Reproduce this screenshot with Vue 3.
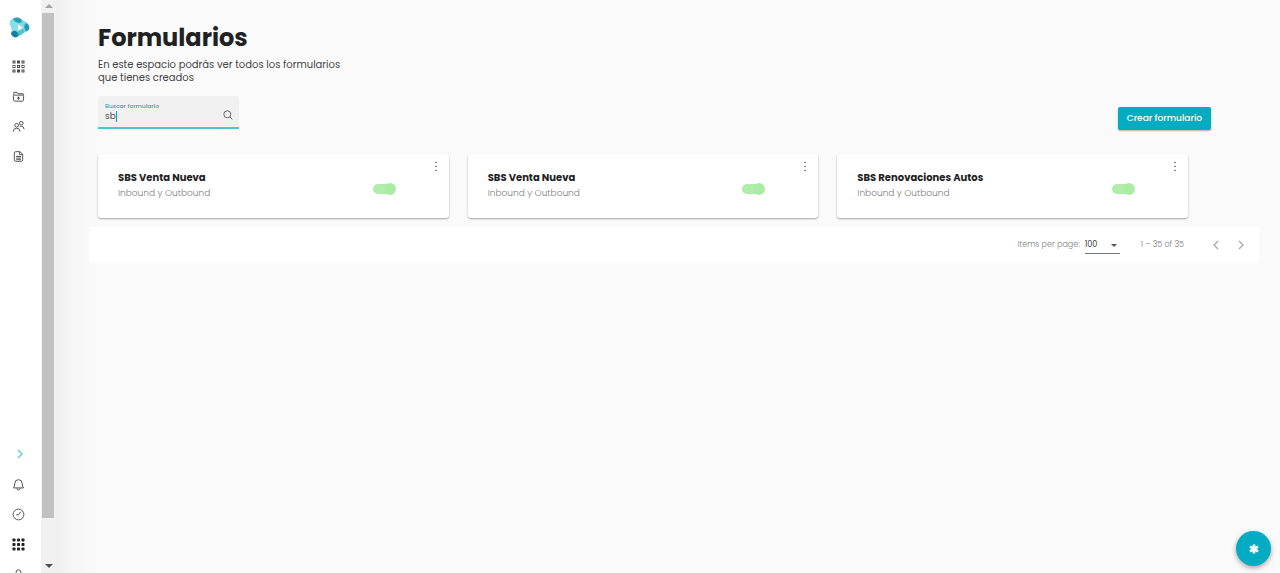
<script setup>
import { ref } from 'vue'

const search = ref('sb')
const pageSize = ref('100')
const forms = ref([
  { id: 1, name: 'SBS Venta Nueva', type: 'Inbound y Outbound', active: true },
  { id: 2, name: 'SBS Venta Nueva', type: 'Inbound y Outbound', active: true },
  { id: 3, name: 'SBS Renovaciones Autos', type: 'Inbound y Outbound', active: true },
])
const cells = [2, 6.5, 11]
</script>

<template>
  <div class="app">
    <aside class="sidebar">
      <nav class="nav" aria-label="Principal">
        <a href="#" class="logo" aria-label="Inicio">
          <svg width="22" height="24" viewBox="0 0 22 24">
            <path d="M1 8Q0 4 4 2.5Q8 0 12 3L17 6Q21 8 20.5 12Q20 15 16 16L10 20Q6 23 3 20Q1 18 3 14Z" fill="#7fdbe3" />
            <path d="M4 3Q8 0 12 3Q14 6 11 7Q6 7 4 3Z" fill="#2b9fb5" />
            <path d="M1 8Q2 4 4 4Q6 8 10 8L8 15L3 14Z" fill="#86dfe6" />
            <path d="M17 7Q21 9 20 13Q18 17 16 14Q14 10 17 7Z" fill="#2c98b2" />
            <path d="M8 16L14 13L16 16L10 20Z" fill="#4fc3d2" />
            <path d="M2 17Q5 13 8 16Q11 19 8 21Q3 22 2 17Z" fill="#187f9e" />
            <path d="M9 8.5L14 11.5L9 14.5Z" fill="#fff" />
          </svg>
        </a>
        <a href="#" class="item" aria-label="Aplicaciones">
          <svg width="13" height="13" viewBox="0 0 13 13" class="line">
            <template v-for="y in cells" :key="y">
              <rect v-for="x in cells" :key="x" :x="x - 1" :y="y - 1" width="2" height="2" />
            </template>
          </svg>
        </a>
        <a href="#" class="item" aria-label="Nueva carpeta">
          <svg width="13" height="13" viewBox="0 0 14 14" class="line">
            <path d="M2 5V2.5H5.5L6.5 4H12V5.5M2 5.5H12Q12.7 5.5 12.6 6.3L12.2 11.2Q12.1 12 11.3 12H2.7Q1.9 12 1.8 11.2L1.4 6.3Q1.3 5.5 2 5.5ZM7 7V10.6M5.2 8.8H8.8" />
          </svg>
        </a>
        <a href="#" class="item" aria-label="Contactos">
          <svg width="13" height="13" viewBox="0 0 14 14" class="line">
            <circle cx="5" cy="5.7" r="2" /><circle cx="10" cy="3.5" r="2" />
            <path d="M1.3 12.5Q1.5 8.8 5 8.8T8.7 12.5M8.2 7.2Q9 6.7 10 6.7Q13 6.7 13 10" />
          </svg>
        </a>
        <a href="#" class="item" aria-label="Formularios">
          <svg width="13" height="13" viewBox="0 0 14 14" class="line">
            <path d="M4 1.8H8.5L11.5 4.5V10.5Q11.5 12.2 10 12.2H4Q2.5 12.2 2.5 10.5V3.3Q2.5 1.8 4 1.8ZM8.2 2V5H11.3M4.5 7H9.7M4.5 8.7H9.7M4.5 10.4H9.7" />
          </svg>
        </a>
        <button type="button" class="item expand" aria-label="Expandir menú">
          <svg width="8" height="10" viewBox="0 0 8 10"><path d="M2 1L6 5L2 9" fill="none" stroke="#6fcfd3" stroke-width="1.5" /></svg>
        </button>
        <a href="#" class="item" aria-label="Notificaciones">
          <svg width="13" height="13" viewBox="0 0 14 14" class="line">
            <path d="M1.5 10.7Q3 9 3 6Q3 1.8 7 1.8T11 6Q11 9 12.5 10.7ZM5.3 11Q5.5 13 7 13T8.7 11" />
          </svg>
        </a>
        <a href="#" class="item" aria-label="Historial">
          <svg width="13" height="13" viewBox="0 0 14 14" class="line">
            <circle cx="7" cy="7" r="5.8" /><path d="M9.5 4L7 7.3H4.5" />
          </svg>
        </a>
        <a href="#" class="item" aria-label="Más aplicaciones">
          <svg width="13" height="13" viewBox="0 0 13 13" fill="#222">
            <template v-for="y in cells" :key="y">
              <rect v-for="x in cells" :key="x" :x="x - 1.5" :y="y - 1.5" width="3" height="3" rx="0.7" />
            </template>
          </svg>
        </a>
        <a href="#" class="item" aria-label="Perfil">
          <svg width="13" height="13" viewBox="0 0 14 14" class="line">
            <circle cx="7" cy="4.5" r="2.6" /><path d="M2 13Q2.5 8.5 7 8.5T12 13" />
          </svg>
        </a>
      </nav>
      <div class="scrollbar" aria-hidden="true">
        <svg class="arrow" width="8" height="4" viewBox="0 0 8 4"><path d="M4 0L8 4H0Z" fill="#a3a3a3" /></svg>
        <div class="track"><div class="thumb"></div></div>
        <svg class="arrow" width="8" height="4" viewBox="0 0 8 4"><path d="M4 4L0 0H8Z" fill="#505050" /></svg>
      </div>
    </aside>

    <main class="content">
      <header class="heading">
        <h1>Formularios</h1>
        <p>En este espacio podrás ver todos los formularios<br>que tienes creados</p>
      </header>

      <div class="toolbar">
        <div class="field">
          <div class="entry">
            <label for="search">Buscar formulario</label>
            <div class="value">
              <input id="search" v-model="search" type="text" autocomplete="off">
              <span class="caret"></span>
            </div>
          </div>
          <svg width="10" height="10" viewBox="0 0 10 10" fill="none" stroke="#666">
            <circle cx="4.3" cy="4.3" r="3.5" /><path d="M7 7L9.3 9.3" />
          </svg>
        </div>
        <button type="button" class="create">Crear formulario</button>
      </div>

      <section class="cards">
        <article v-for="form in forms" :key="form.id" class="card">
          <div class="info">
            <h2>{{ form.name }}</h2>
            <p>{{ form.type }}</p>
          </div>
          <input v-model="form.active" type="checkbox" role="switch" class="switch" :aria-label="form.name">
          <button type="button" class="more" aria-label="Opciones">
            <svg width="4" height="11" viewBox="0 0 4 11" fill="#555">
              <circle cx="2" cy="1.5" r="0.8" /><circle cx="2" cy="5.5" r="0.8" /><circle cx="2" cy="9.5" r="0.8" />
            </svg>
          </button>
        </article>
      </section>

      <footer class="paginator">
        <label for="size">Items per page:</label>
        <div class="select">
          <select id="size" v-model="pageSize">
            <option>100</option>
            <option>50</option>
          </select>
          <svg width="6" height="3" viewBox="0 0 6 3"><path d="M0 0H6L3 3Z" /></svg>
        </div>
        <span class="range">1 – 35 of 35</span>
        <button type="button" aria-label="Anterior">
          <svg width="6" height="10" viewBox="0 0 6 10"><path d="M5 1L1 5L5 9" /></svg>
        </button>
        <button type="button" aria-label="Siguiente">
          <svg width="6" height="10" viewBox="0 0 6 10"><path d="M1 1L5 5L1 9" /></svg>
        </button>
      </footer>
    </main>

    <button type="button" class="fab" aria-label="Ayuda">
      <svg width="10" height="10" viewBox="0 0 10 10" stroke="#fff" stroke-width="2.6">
        <path d="M5 0.5V9.5M1 2.7L9 7.3M9 2.7L1 7.3" />
      </svg>
    </button>
  </div>
</template>

<style>
body {
  margin: 0;
  background: #fafafa;
}
</style>

<style scoped>
.app {
  display: flex;
  height: 100vh;
  overflow: hidden;
  font-family: Poppins, Inter, "Open Sans", sans-serif;
  color: #212121;
}
h1, h2, p {
  margin: 0;
}
button {
  font-family: inherit;
  border: 0;
  padding: 0;
  background: none;
  cursor: pointer;
}
svg {
  display: block;
}
.sidebar {
  display: flex;
  flex: none;
  background: #fff;
}
.nav {
  display: flex;
  flex-direction: column;
  width: 41px;
  height: calc(100vh + 16px);
}
.logo {
  padding: 16px 0 11px 9px;
}
.item {
  display: flex;
  flex: none;
  align-items: center;
  height: 30px;
  padding-left: 12px;
}
.expand {
  margin-top: auto;
  padding-left: 16px;
}
.line {
  fill: none;
  stroke: #4a4a4a;
  stroke-width: 1;
}
.scrollbar {
  display: flex;
  flex-direction: column;
  width: 15px;
  height: 100vh;
  background: #f1f1f1;
}
.arrow {
  flex: none;
  align-self: center;
  margin: 4px 0 5px;
}
.track {
  flex: 1;
  padding: 0 2px 0 1px;
}
.thumb {
  height: 92.3%;
  background: #c1c1c1;
}
.content {
  flex: 1;
  min-width: 0;
  padding: 22px 21px 0 33px;
  background: linear-gradient(90deg, #eeeeee, #f6f6f6 16px, #fafafa 42px);
}
.heading {
  padding-left: 9px;
}
h1 {
  font-size: 24px;
  line-height: 32px;
  font-weight: 700;
}
.heading p {
  margin-top: 4px;
  font-size: 10px;
  line-height: 13px;
  color: #444;
}
.toolbar {
  display: flex;
  align-items: flex-start;
  justify-content: space-between;
  margin: 12px 48px 0 9px;
}
.field {
  display: flex;
  align-items: center;
  box-sizing: border-box;
  width: 141px;
  height: 33px;
  padding: 0 6px 0 7px;
  border-bottom: 2px solid #4cc4d4;
  border-radius: 3px 3px 0 0;
  background: #f0f0f0;
}
.field svg {
  margin-top: 6px;
}
.entry {
  flex: 1;
  min-width: 0;
}
.field label {
  display: block;
  padding-top: 2px;
  font-size: 6px;
  line-height: 8px;
  font-weight: 500;
  color: #1fa9bd;
}
.value {
  position: relative;
}
.field input {
  display: block;
  width: 100%;
  height: 13px;
  padding: 0;
  border: 0;
  outline: 0;
  background: none;
  font: 9px/13px Poppins, Inter, "Open Sans", sans-serif;
  color: #555;
}
.caret {
  position: absolute;
  left: 11px;
  top: 1px;
  width: 1px;
  height: 11px;
  background: #00acc1;
}
.create {
  height: 23px;
  margin-top: 11px;
  padding: 0 9px;
  border-radius: 2px;
  background: #03acc2;
  box-shadow: 0 1px 2px rgba(0, 0, 0, 0.3);
  font-size: 9px;
  font-weight: 500;
  color: #fff;
}
.cards {
  display: grid;
  grid-template-columns: repeat(3, 1fr);
  gap: 19px;
  margin: 24px 71px 0 9px;
}
.card {
  position: relative;
  display: flex;
  align-items: center;
  justify-content: space-between;
  padding: 16px 53px 17px 20px;
  border-radius: 3px;
  background: #fff;
  box-shadow: 0 1px 2px rgba(0, 0, 0, 0.35);
}
.card h2 {
  font-size: 10px;
  line-height: 15px;
  font-weight: 700;
}
.card p {
  font-size: 9px;
  line-height: 16px;
  font-weight: 300;
  color: #808080;
}
.switch {
  appearance: none;
  position: relative;
  width: 23px;
  height: 12px;
  margin: 6px 0 0;
}
.switch::before {
  content: "";
  position: absolute;
  inset: 1px 2px 1px 0;
  border-radius: 5px;
  background: #b0ecaa;
}
.switch::after {
  content: "";
  position: absolute;
  top: 0;
  left: 0;
  width: 12px;
  height: 12px;
  border-radius: 50%;
  background: #abeca4;
}
.switch:checked::after {
  left: 11px;
}
.more {
  position: absolute;
  top: 7px;
  right: 11px;
}
.paginator {
  display: flex;
  align-items: center;
  height: 36px;
  margin-top: 9px;
  padding-right: 15px;
  background: #fff;
  font-size: 8px;
  line-height: 12px;
  font-weight: 300;
  color: #808080;
}
.paginator label {
  margin-left: auto;
}
.select {
  position: relative;
  margin-left: 5px;
  border-bottom: 1px solid #777;
}
.select select {
  appearance: none;
  display: block;
  width: 35px;
  height: 16px;
  padding: 0;
  border: 0;
  background: none;
  font: inherit;
  font-weight: 400;
  color: #333;
}
.select svg {
  position: absolute;
  right: 3px;
  top: 7px;
  pointer-events: none;
}
.select path {
  fill: #555;
}
.range {
  margin: 0 29px 0 21px;
}
.paginator button + button {
  margin-left: 19px;
}
.paginator button path {
  fill: none;
  stroke: #aaa;
  stroke-width: 1.4;
}
.fab {
  position: fixed;
  right: 9px;
  bottom: 7px;
  display: flex;
  align-items: center;
  justify-content: center;
  width: 35px;
  height: 35px;
  border-radius: 50%;
  background: #03acc2;
  box-shadow: 0 2px 5px rgba(0, 0, 0, 0.35);
}
</style>
